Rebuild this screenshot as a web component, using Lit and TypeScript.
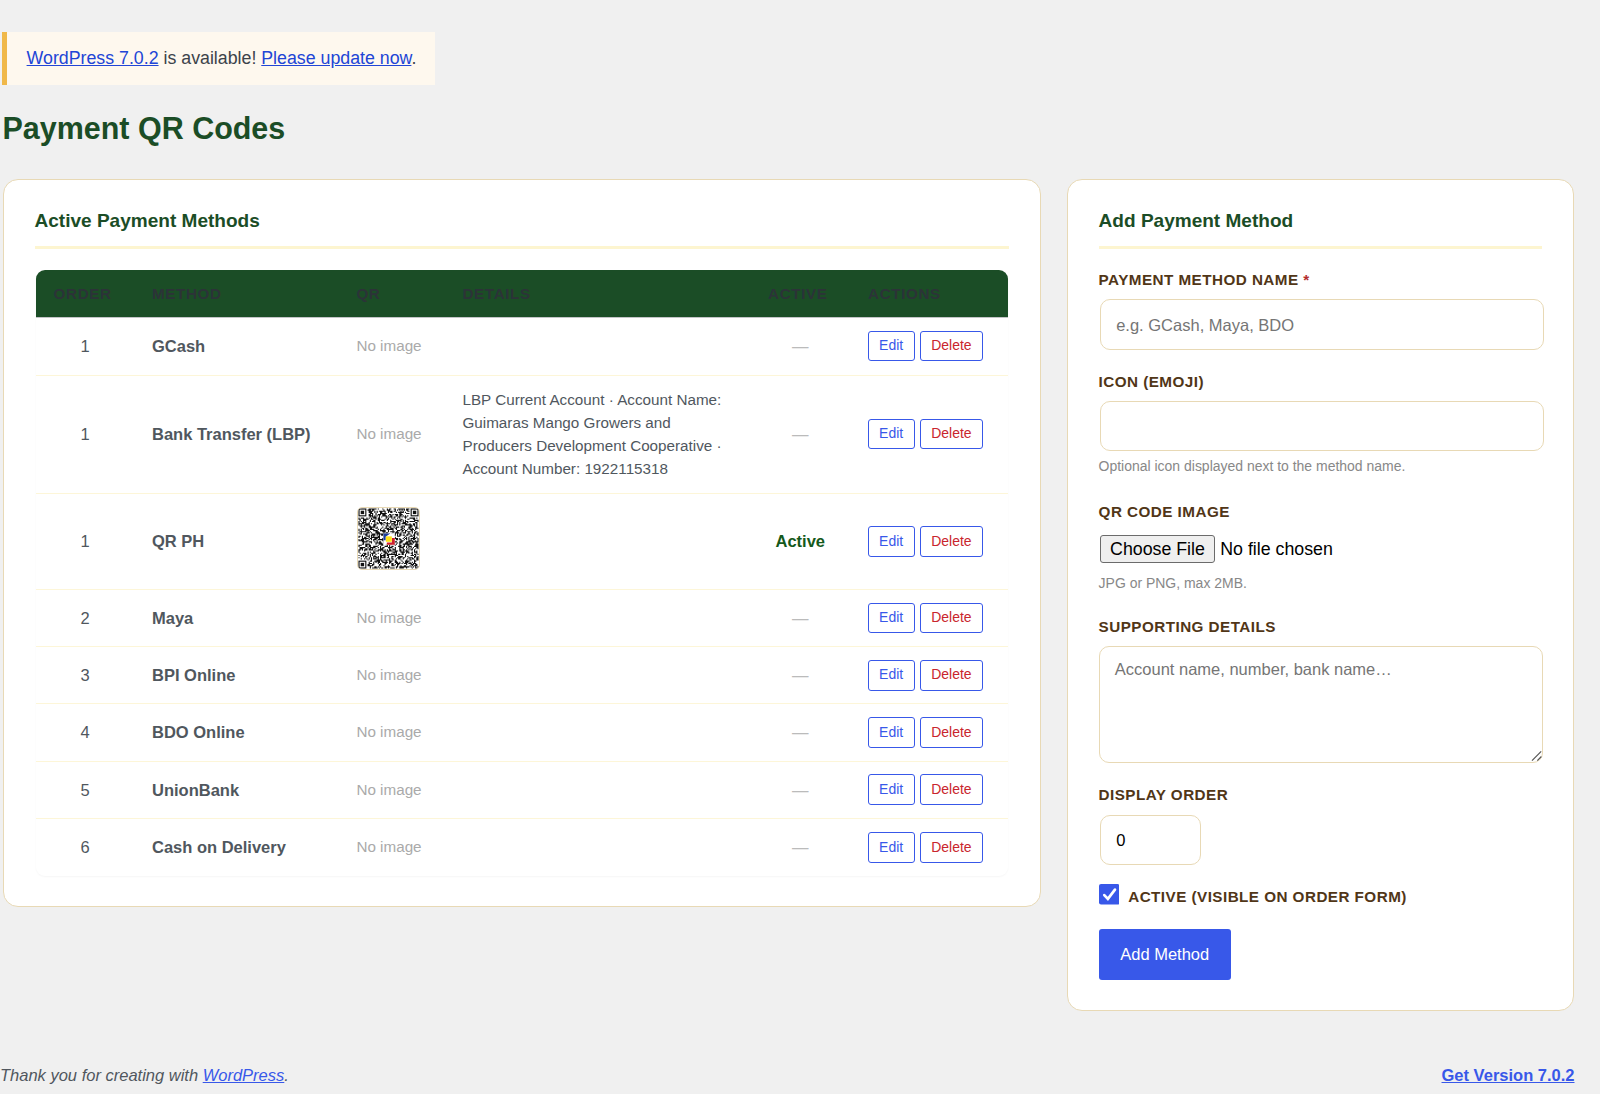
import { LitElement, html, css, svg, nothing } from "lit";
import { customElement } from "lit/decorators.js";

interface Method {
  order: number;
  name: string;
  qr?: boolean;
  details?: string;
  active?: boolean;
  size?: string;
}

const METHODS: Method[] = [
  { order: 1, name: "GCash", size: "first" },
  {
    order: 1,
    name: "Bank Transfer (LBP)",
    details:
      "LBP Current Account · Account Name: Guimaras Mango Growers and Producers Development Cooperative · Account Number: 1922115318",
    size: "detail",
  },
  { order: 1, name: "QR PH", qr: true, active: true, size: "image" },
  { order: 2, name: "Maya" },
  { order: 3, name: "BPI Online" },
  { order: 4, name: "BDO Online" },
  { order: 5, name: "UnionBank" },
  { order: 6, name: "Cash on Delivery" },
];

const QR_SIZE = 53;

/** Builds the dark modules of the QR thumbnail as one path. */
function qrModules(): string {
  let seed = 20117;
  const next = () => {
    seed = (seed * 1103515245 + 12345) % 2147483648;
    return seed / 2147483648;
  };
  const inFinder = (x: number, y: number) =>
    (x < 8 && y < 8) || (x >= QR_SIZE - 8 && y < 8) || (x < 8 && y >= QR_SIZE - 8);
  let d = "";
  for (let y = 0; y < QR_SIZE; y++) {
    for (let x = 0; x < QR_SIZE; x++) {
      const dark = next() < 0.52;
      const centre = x > 23 && x < 31 && y > 23 && y < 31;
      if (dark && !inFinder(x, y) && !centre) d += `M${x} ${y}h1v1h-1z`;
    }
  }
  return d;
}

const QR_PATH = qrModules();

const finder = (x: number, y: number) => svg`
  <rect x=${x + 0.5} y=${y + 0.5} width="6" height="6" fill="none" stroke="#111" stroke-width="1"></rect>
  <rect x=${x + 2} y=${y + 2} width="3" height="3" fill="#111"></rect>`;

@customElement("qr-thumb")
export class QrThumb extends LitElement {
  static styles = css`
    :host {
      display: block;
      box-sizing: border-box;
      width: 63px;
      height: 63px;
      border: 1px solid #e8d9b5;
      border-radius: 5px;
      overflow: hidden;
      background: #fff;
    }
    .code {
      display: block;
      width: 61px;
      height: 61px;
    }
  `;

  render() {
    return html`<svg class="code" viewBox="-0.4 -0.4 53.8 53.8" aria-label="QR code">
      <path d=${QR_PATH} fill="#111"></path>
      ${finder(0, 0)} ${finder(QR_SIZE - 7, 0)} ${finder(0, QR_SIZE - 7)}
      <rect x="22" y="22" width="10" height="10" fill="#fff"></rect>
      <path d="M22 22h6l-4 3v3h-2z" fill="#1d3f9c"></path>
      <path d="M29.5 26h2.5v6h-7v-2h4.5z" fill="#d0202c"></path>
      <rect x="24.2" y="24.6" width="5.2" height="4.8" fill="#ffe21a"></rect>
    </svg>`;
  }
}

@customElement("app-root")
export class AppRoot extends LitElement {
  static styles = css`
    :host {
      display: flex;
      flex-direction: column;
      box-sizing: border-box;
      width: 1600px;
      height: 1094px;
      overflow: hidden;
      padding-top: 32px;
      background: #f0f0f0;
      color: #3c434a;
      font-family: "Liberation Sans", Arial, sans-serif;
      font-size: 16.51px;
    }
    * {
      box-sizing: border-box;
    }
    a {
      color: #3858e9;
    }
    .notice {
      align-self: flex-start;
      height: 53px;
      margin-left: 2.4px;
      padding: 0 19px 0 19.2px;
      border-left: 5px solid #f0b849;
      background: #fef8ee;
      font-size: 17.78px;
      line-height: 52px;
      white-space: nowrap;
    }
    .notice a {
      color: #2145d6;
    }
    .heading {
      margin: 0 0 0 2.5px;
      height: 94px;
      padding-top: 23px;
      color: #1b4d26;
      font-size: 30.48px;
      line-height: 41px;
      font-weight: 700;
    }
    .columns {
      display: grid;
      grid-template-columns: 1038.5px 507.8px;
      gap: 25.6px;
      align-items: start;
      margin-left: 2.5px;
    }
    .card {
      border: 1px solid #e8d9b5;
      border-radius: 15px;
      background: #fff;
      padding: 25px 31px 0;
    }
    .card.list {
      height: 728px;
    }
    .card.form {
      height: 832px;
      padding-left: 31px;
      padding-right: 31px;
    }
    .title {
      margin: 0;
      height: 44px;
      border-bottom: 3px solid #fdf5d0;
      color: #1b4d26;
      font-size: 19.05px;
      line-height: 31.5px;
      font-weight: 700;
    }
    .list .title {
      margin-bottom: 21.3px;
    }
    .table {
      margin: 0 1.3px;
      border-radius: 9px;
      overflow: hidden;
      box-shadow: 0 1px 2px rgba(0, 0, 0, 0.04);
      color: #50575e;
    }
    .row {
      display: grid;
      grid-template-columns: 98.4px 204.4px 106.1px 305.6px 100px 1fr;
      align-items: center;
      height: 57.15px;
      border-bottom: 1px solid #fdf6d8;
    }
    .row.first {
      height: 57.8px;
    }
    .row.detail {
      height: 118.3px;
    }
    .row.image {
      height: 96.2px;
    }
    .row:last-child {
      border-bottom: none;
      height: 57.4px;
    }
    .head {
      height: 47.5px;
      background: #1b4d26;
      border-bottom: 1px solid #c3c4c7;
      color: #2c3338;
      font-size: 15.24px;
      font-weight: 700;
      letter-spacing: 0.04em;
      text-transform: uppercase;
    }
    .cell {
      padding: 0.8px 17.8px 0;
      line-height: 22.86px;
    }
    .head .cell {
      padding-right: 0;
    }
    .center {
      text-align: center;
    }
    .name {
      font-weight: 700;
      white-space: nowrap;
      padding-right: 0;
    }
    .none {
      color: #aaa;
      font-size: 15.24px;
      white-space: nowrap;
    }
    .details {
      font-size: 15.24px;
    }
    .dash {
      color: #bbb;
    }
    .on {
      color: #14591b;
      font-weight: 700;
    }
    .thumb {
      display: block;
      margin: 0 0 7px 0.6px;
    }
    .actions {
      display: flex;
      gap: 5.2px;
      padding: 0 0 0 17.4px;
    }
    .small {
      height: 30.5px;
      padding: 0 10.45px 1.6px;
      border: 1px solid #3858e9;
      border-radius: 3px;
      background: #fff;
      color: #3858e9;
      font-family: inherit;
      font-size: 13.97px;
      line-height: 26px;
    }
    .small.delete {
      color: #c9252d;
    }
    .label {
      display: block;
      height: 22px;
      color: #513617;
      font-size: 15.24px;
      line-height: 22px;
      font-weight: 700;
      letter-spacing: 0.03em;
      text-transform: uppercase;
      white-space: nowrap;
    }
    .title + .label {
      margin-top: 20.3px;
    }
    .star {
      color: #b32d2e;
    }
    .field {
      display: block;
      width: 443.6px;
      height: 50.5px;
      margin: 8px 0 0 1.4px;
      padding: 1.5px 15.2px 0;
      border: 1px solid #e8d9b5;
      border-radius: 10px;
      background: #fff;
      color: #000;
      font-family: inherit;
      font-size: 16.51px;
      outline: none;
    }
    .field::placeholder {
      color: #757575;
    }
    .field.number {
      width: 100.8px;
      margin-top: 9px;
      padding-top: 0;
    }
    .area-wrap {
      position: relative;
      width: 444px;
      margin-top: 8px;
    }
    .field.area {
      width: 444px;
      height: 116.5px;
      margin: 0;
      padding: 10.4px 15.2px;
      line-height: 23px;
      resize: none;
    }
    .grip {
      position: absolute;
      right: 0;
      bottom: 0;
      width: 14px;
      height: 14px;
    }
    .hint {
      margin: 0;
      color: #888;
      font-size: 13.97px;
      line-height: 18px;
    }
    .hint-icon {
      margin-top: 6.2px;
    }
    .hint-file {
      margin-top: 10.9px;
    }
    .gap-field {
      margin-top: 21px;
    }
    .hint-icon + .gap-field {
      margin-top: 25.6px;
    }
    .hint-file + .gap-field {
      margin-top: 24.5px;
    }
    .file {
      display: flex;
      align-items: center;
      gap: 5.3px;
      height: 27.5px;
      margin: 12.4px 0 0 1.4px;
      color: #000;
      font-size: 17.78px;
      line-height: 25px;
    }
    .choose {
      width: 115px;
      height: 27.5px;
      padding: 0;
      border: 1px solid #6b6b6b;
      border-radius: 3px;
      background: #efefef;
      color: #000;
      font-family: inherit;
      font-size: 17.78px;
      line-height: 25px;
    }
    .check {
      display: flex;
      align-items: flex-start;
      gap: 9px;
      margin-top: 19px;
    }
    .box {
      display: block;
      flex: none;
      width: 20.6px;
      height: 20.6px;
    }
    .check .label {
      margin-top: 2px;
    }
    .submit {
      display: block;
      width: 132.3px;
      height: 51px;
      margin-top: 20.6px;
      padding: 0;
      border: none;
      border-radius: 3px;
      background: #3858e9;
      color: #fff;
      font-family: inherit;
      font-size: 16.51px;
    }
    .footer {
      display: flex;
      justify-content: space-between;
      margin-top: 53.2px;
      padding-right: 25.5px;
      color: #50575e;
      line-height: 22px;
    }
    .thanks {
      font-style: italic;
    }
    .version {
      font-weight: 700;
    }
  `;

  private row(m: Method) {
    return html`<div class="row ${m.size ?? ""}" role="row">
      <div class="cell center" role="cell">${m.order}</div>
      <div class="cell name" role="cell">${m.name}</div>
      <div class="cell none" role="cell">
        ${m.qr ? html`<qr-thumb class="thumb"></qr-thumb>` : "No image"}
      </div>
      <div class="cell details" role="cell">${m.details ?? nothing}</div>
      <div class="cell center ${m.active ? "on" : "dash"}" role="cell">${m.active ? "Active" : "—"}</div>
      <div class="actions" role="cell">
        <button class="small">Edit</button><button class="small delete">Delete</button>
      </div>
    </div>`;
  }

  render() {
    return html`
      <div class="notice">
        <a href="#">WordPress 7.0.2</a> is available! <a href="#">Please update now</a>.
      </div>
      <h1 class="heading">Payment QR Codes</h1>
      <div class="columns">
        <section class="card list">
          <h2 class="title">Active Payment Methods</h2>
          <div class="table" role="table">
            <div class="row head" role="row">
              ${["Order", "Method", "QR", "Details", "Active", "Actions"].map(
                (h) => html`<div class="cell" role="columnheader">${h}</div>`
              )}
            </div>
            ${METHODS.map((m) => this.row(m))}
          </div>
        </section>
        <section class="card form">
          <h2 class="title">Add Payment Method</h2>
          <label class="label">Payment Method Name <span class="star">*</span></label>
          <input class="field" type="text" placeholder="e.g. GCash, Maya, BDO" />
          <label class="label gap-field">Icon (emoji)</label>
          <input class="field" type="text" />
          <p class="hint hint-icon">Optional icon displayed next to the method name.</p>
          <label class="label gap-field">QR Code Image</label>
          <div class="file"><button class="choose">Choose File</button><span>No file chosen</span></div>
          <p class="hint hint-file">JPG or PNG, max 2MB.</p>
          <label class="label gap-field">Supporting Details</label>
          <div class="area-wrap">
            <textarea class="field area" placeholder="Account name, number, bank name…"></textarea>
            <svg class="grip" viewBox="0 0 14 14" aria-hidden="true">
              <path d="M3 11.6 12.2 2.4M8.3 11.6 12.4 7.5" fill="none" stroke="#555" stroke-width="1.2"></path>
            </svg>
          </div>
          <label class="label gap-field">Display Order</label>
          <input class="field number" type="text" value="0" />
          <div class="check">
            <svg class="box" viewBox="0 0 16 16" aria-hidden="true">
              <rect width="16" height="16" rx="1.6" fill="#3858e9"></rect>
              <path d="M4.1 8.6 6.9 11.6 12.4 4.4" fill="none" stroke="#fff" stroke-width="2.1" stroke-linecap="round"></path>
            </svg>
            <span class="label">Active (visible on order form)</span>
          </div>
          <button class="submit">Add Method</button>
        </section>
      </div>
      <footer class="footer">
        <span class="thanks">Thank you for creating with <a href="#">WordPress</a>.</span>
        <a class="version" href="#">Get Version 7.0.2</a>
      </footer>
    `;
  }
}
